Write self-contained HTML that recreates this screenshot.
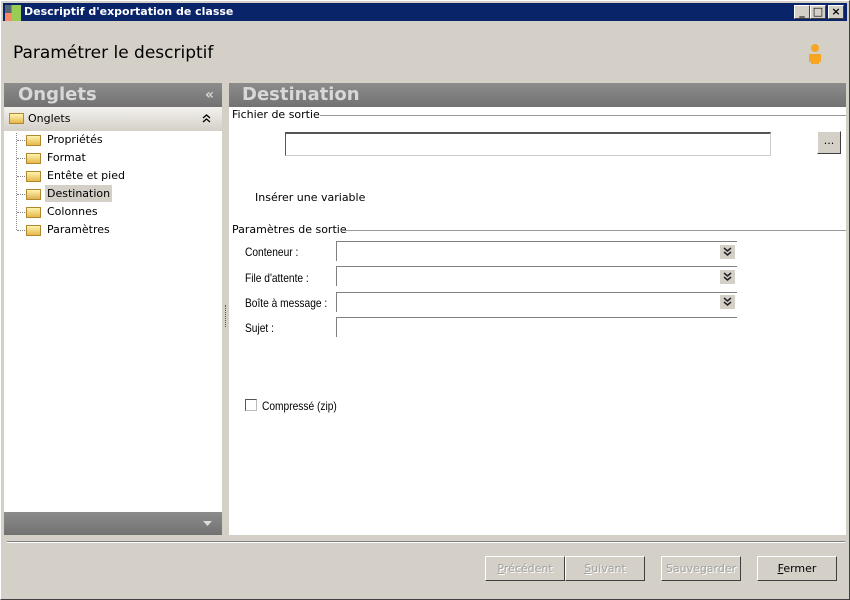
<!DOCTYPE html>
<html><head><meta charset="utf-8"><style>
*{margin:0;padding:0;box-sizing:border-box}
body{width:850px;height:600px;background:#d4d0c8;font-family:"DejaVu Sans","Liberation Sans",sans-serif;font-size:11px;position:relative;overflow:hidden}
.a{position:absolute}
.win{left:0;top:0;width:850px;height:600px;border:1px solid #fff;border-right-color:#404040;border-bottom-color:#404040;outline:1px solid #d4d0c8}
.tb{left:3px;top:3px;width:844px;height:18px;background:#0a246a;color:#fff;font-weight:bold;font-size:11px;line-height:18px;padding-left:21px}
.cb{top:5px;width:16px;height:14px;background:#d4d0c8;border:1px solid;border-color:#fff #404040 #404040 #fff;font-size:11px;line-height:11px;text-align:center;color:#000;font-weight:bold}
.hdr{height:24px;background:linear-gradient(#8c8c8c,#727272);color:#d8d8d8;font-weight:bold;font-size:18px;line-height:24px;padding-left:14px}
.tree div{position:absolute;left:47px}
.fold{position:absolute;width:15px;height:11px;background:linear-gradient(#fff3b0,#e6b84a);border:1px solid #b08830}
.lbl{position:absolute;font-family:"Liberation Sans",sans-serif;font-size:12px;color:#000;transform:scaleX(.85);transform-origin:0 0}
.inp{position:absolute;height:24px;border-left:1px solid #808080;border-top:1px solid #808080}
.dd{position:absolute;width:14px;height:13px;background:#d4d0c8;border:1px solid #bbb}
.btn{position:absolute;top:556px;height:25px;border:1px solid;border-color:#fff #404040 #404040 #fff;background:#d4d0c8;text-align:center;line-height:23px;font-size:11px;color:#a0a0a0;text-shadow:1px 1px #fff}
</style></head><body>
<div class="a win"></div>
<div class="a tb">Descriptif d'exportation de classe</div>
<div class="a" style="left:5px;top:5px;width:16px;height:16px;background:linear-gradient(90deg,#567 0 40%,#9c5 40%)"><div style="position:absolute;left:0;top:8px;width:7px;height:8px;background:#f86"></div></div>
<div class="a cb" style="left:794px">_</div>
<div class="a cb" style="left:810px">□</div>
<div class="a cb" style="left:828px">×</div>
<div class="a" style="left:13px;top:43px;font-size:17px">Paramétrer le descriptif</div>
<svg class="a" style="left:806px;top:43px" width="18" height="22"><circle cx="9" cy="5" r="4" fill="#f6a623"/><path d="M3 11h12v8h-2v2h-8v-2h-2z" fill="#f6a623"/></svg>

<div class="a hdr" style="left:4px;top:83px;width:218px">Onglets<span style="position:absolute;right:8px;font-size:14px">«</span></div>
<div class="a" style="left:4px;top:107px;width:218px;height:405px;background:#fff"></div>
<div class="a" style="left:4px;top:107px;width:218px;height:24px;background:linear-gradient(#f4f2ee,#d4d0c8)"></div>
<div class="fold" style="left:9px;top:113px"></div>
<div class="a" style="left:28px;top:112px">Onglets</div>
<svg class="a" style="left:202px;top:114px" width="9" height="9"><path d="M1 4l3.5-3 3.5 3M1 8l3.5-3 3.5 3" stroke="#000" fill="none" stroke-width="1.3"/></svg>
<div class="a" style="left:16px;top:133px;width:1px;height:97px;border-left:1px dotted #888"></div>
<div class="tree">
<div style="top:133px">Propriétés</div>
<div style="top:151px">Format</div>
<div style="top:169px">Entête et pied</div>
<div style="top:185px;left:45px;background:#d4d0c8;padding:2px 2px">Destination</div>
<div style="top:205px">Colonnes</div>
<div style="top:223px">Paramètres</div>
</div>
<div class="fold" style="left:26px;top:135px"></div>
<div class="fold" style="left:26px;top:153px"></div>
<div class="fold" style="left:26px;top:171px"></div>
<div class="fold" style="left:26px;top:189px;background:linear-gradient(#fff3b0,#e0b050)"></div>
<div class="fold" style="left:26px;top:207px"></div>
<div class="fold" style="left:26px;top:225px"></div>
<div class="a" style="left:17px;top:140px;width:8px;border-top:1px dotted #888"></div>
<div class="a" style="left:17px;top:158px;width:8px;border-top:1px dotted #888"></div>
<div class="a" style="left:17px;top:176px;width:8px;border-top:1px dotted #888"></div>
<div class="a" style="left:17px;top:194px;width:8px;border-top:1px dotted #888"></div>
<div class="a" style="left:17px;top:212px;width:8px;border-top:1px dotted #888"></div>
<div class="a" style="left:17px;top:230px;width:8px;border-top:1px dotted #888"></div>
<div class="a" style="left:4px;top:512px;width:218px;height:23px;background:linear-gradient(#8c8c8c,#727272)"></div>
<svg class="a" style="left:203px;top:521px" width="9" height="6"><path d="M0 0h9l-4.5 5z" fill="#ddd"/></svg>
<div class="a" style="left:225px;top:305px;height:22px;border-left:1px dotted #555"></div>

<div class="a hdr" style="left:229px;top:83px;width:617px;padding-left:13px">Destination</div>
<div class="a" style="left:229px;top:107px;width:617px;height:428px;background:#fff"></div>
<div class="a" style="left:232px;top:108px">Fichier de sortie</div>
<div class="a" style="left:320px;top:115px;width:526px;border-top:1px solid #999"></div>
<div class="a" style="left:285px;top:132px;width:486px;height:24px;border:1px solid #ccc;border-top:2px solid #555;border-left:1px solid #555"></div>
<div class="a" style="left:817px;top:131px;width:24px;height:23px;background:#d4d0c8;border:1px solid;border-color:#fff #404040 #404040 #fff;text-align:center;line-height:18px">...</div>
<div class="a" style="left:255px;top:191px">Insérer une variable</div>
<div class="a" style="left:232px;top:223px">Paramètres de sortie</div>
<div class="a" style="left:341px;top:230px;width:505px;border-top:1px solid #999"></div>
<div class="lbl" style="left:245px;top:245px">Conteneur :</div>
<div class="lbl" style="left:245px;top:271px">File d'attente :</div>
<div class="lbl" style="left:245px;top:296px">Boîte à message :</div>
<div class="lbl" style="left:245px;top:321px">Sujet :</div>
<div class="inp" style="left:336px;top:241px;width:401px;height:20px"></div>
<div class="inp" style="left:336px;top:266px;width:401px;height:20px"></div>
<div class="inp" style="left:336px;top:292px;width:401px;height:20px"></div>
<div class="inp" style="left:336px;top:317px;width:401px;height:20px"></div>
<svg class="a" style="left:720px;top:245px" width="15" height="14"><rect width="15" height="14" fill="#d4d0c8"/><path d="M4 3l3.5 3 3.5-3M4 7l3.5 3 3.5-3" stroke="#222" fill="none" stroke-width="1.5"/></svg>
<svg class="a" style="left:720px;top:270px" width="15" height="14"><rect width="15" height="14" fill="#d4d0c8"/><path d="M4 3l3.5 3 3.5-3M4 7l3.5 3 3.5-3" stroke="#222" fill="none" stroke-width="1.5"/></svg>
<svg class="a" style="left:720px;top:295px" width="15" height="14"><rect width="15" height="14" fill="#d4d0c8"/><path d="M4 3l3.5 3 3.5-3M4 7l3.5 3 3.5-3" stroke="#222" fill="none" stroke-width="1.5"/></svg>
<div class="a" style="left:245px;top:399px;width:12px;height:12px;border:1px solid #555;border-right-color:#bbb;border-bottom-color:#bbb"></div>
<div class="lbl" style="left:262px;top:399px">Compressé (zip)</div>

<div class="a" style="left:7px;top:541px;width:838px;border-top:1px solid #808080;border-bottom:1px solid #fff"></div>
<div class="btn" style="left:485px;width:80px"><u>P</u>récédent</div>
<div class="btn" style="left:565px;width:80px"><u>S</u>uivant</div>
<div class="btn" style="left:661px;width:80px">Sauvegarder</div>
<div class="btn" style="left:757px;width:80px;color:#000;text-shadow:none"><u>F</u>ermer</div>
</body></html>
